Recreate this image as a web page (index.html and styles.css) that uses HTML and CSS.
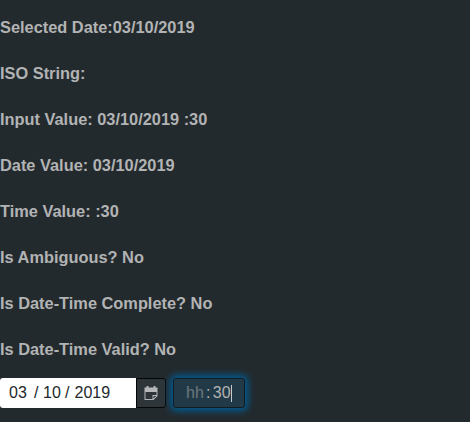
FILE: index.html
```html
<!DOCTYPE html>
<html lang="en">
<head>
<meta charset="utf-8">
<title>Date time picker</title>
<link rel="stylesheet" href="styles.css">
</head>
<body>
<main>
<p class="row">Selected Date:03/10/2019</p>
<p class="row">ISO String:</p>
<p class="row">Input Value: 03/10/2019 :30</p>
<p class="row">Date Value: 03/10/2019</p>
<p class="row">Time Value: :30</p>
<p class="row">Is Ambiguous? No</p>
<p class="row">Is Date-Time Complete? No</p>
<p class="row">Is Date-Time Valid? No</p>
<div class="picker">
<div class="date"><span class="month">03</span><span class="slash">/</span><span class="day">10</span><span class="slash">/</span><span class="year">2019</span></div>
<button class="cal" aria-label="Open calendar"><svg width="14" height="14" viewBox="0 0 14 14"><path fill="#b5b7b8" fill-rule="evenodd" d="M.5 1.500H2.500V0H4.500V1.500H9.500V0H11.500V1.500H13.500V10L9.500 14H.5zM1.500 6V13H8.500V9H12.500V6zM9.500 10V12.500L12 10z"/></svg></button>
<div class="time"><span class="hh">hh</span><span class="colon">:</span><span class="mm">30</span><span class="caret"></span></div>
</div>
</main>
</body>
</html>
```

FILE: styles.css
```css
* { box-sizing: border-box; }
body { margin: 0; background: #232a2d; color: #b2b3b4; font-family: "Liberation Sans", Arial, sans-serif; font-size: 16px; }
main { height: 422px; padding-top: 18px; }
.row { margin: 0 0 28px; height: 18px; line-height: 18px; font-size: 16.38px; font-weight: bold; white-space: pre; }
.picker { display: flex; height: 30px; margin-top: -8px; line-height: 30px; }
.date { display: flex; width: 136px; padding-left: 9px; background: #fff; color: #22282b; border-radius: 3px 0 0 3px; }
.month { width: 25px; }
.slash { width: 9px; }
.day { width: 22px; }
.year { margin-left: .5px; }
.cal { width: 30px; padding: 0; border: 1px solid #050707; border-radius: 0 3px 3px 0; background: #2d3538; display: flex; align-items: center; justify-content: center; }
.time { display: flex; align-items: center; width: 72px; margin-left: 7px; padding-left: 12px; background: #223a47; color: #b2b3b4; border: 1px solid #101c23; border-radius: 3px; box-shadow: 0 0 7px 3px #005b91; }
.hh { color: #6d777c; }
.colon { width: 9px; text-align: center; }
.caret { width: 1px; height: 17px; background: #c8cbcd; }
```
